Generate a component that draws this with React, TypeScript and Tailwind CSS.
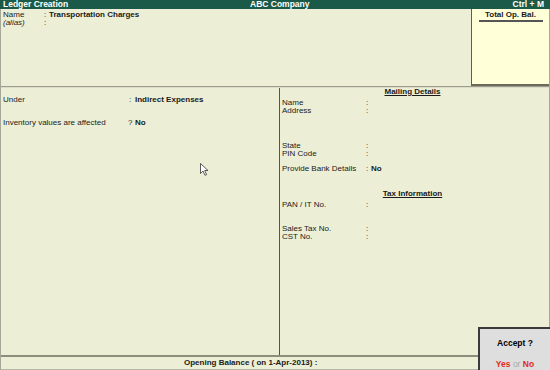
import React from "react";

const font = { fontFamily: '"Liberation Sans", Arial, sans-serif' };

function Row({ label, colon = ":", value, labelW, colonW = "w-[5px]", className = "" }: { label: React.ReactNode; colon?: string; value?: string; labelW: string; colonW?: string; className?: string }) {
  return (
    <div className={`flex h-[8px] items-center leading-[8px] ${className}`}>
      <div className={`${labelW} shrink-0`}>{label}</div>
      <div className={`${colonW} shrink-0`}>{colon}</div>
      {value ? <div className="font-bold">{value}</div> : null}
    </div>
  );
}

export default function App() {
  return (
    <div className="relative w-[550px] h-[370px] bg-[#ecefd6] text-[8px] text-[#1a1a1a] overflow-hidden" style={font}>
      {/* Title bar */}
      <div className="h-[9px] bg-[#1b5a48] text-white font-bold text-[8.5px] leading-[9px] flex items-center px-[3px] relative">
        <span>Ledger Creation</span>
        <span className="absolute left-[250px] top-0">ABC Company</span>
        <span className="ml-auto pr-[3px]">Ctrl + M</span>
      </div>

      <div className="border-l border-r border-[#a8a898] h-[361px] flex flex-col">
        {/* Top section */}
        <div className="h-[77px] flex">
          <div className="flex-1 pt-[2px] pl-[2px]">
            <Row label="Name" value="Transportation Charges" labelW="w-[41px]" />
            <Row label={<i>(alias)</i>} labelW="w-[41px]" />
          </div>
          <div className="w-[78px] bg-[#ffffd8] border-l border-[#5f5f50] border-b-2 border-b-[#6b6a5a] flex flex-col items-center pt-[2px]">
            <div className="font-bold leading-[8px] border-b-2 border-[#555] w-[64px] text-center pb-[1px]">Total Op. Bal.</div>
          </div>
        </div>

        {/* divider */}
        <div className="h-[2px] border-t border-[#9d9d8d] bg-[#dcdcc8]" />

        {/* Middle section */}
        <div className="flex-1 flex">
          <div className="w-[279px] border-r border-[#55554a] pl-[2px] pt-[8px] relative">
            <Row label="Under" value="Indirect Expenses" labelW="w-[126px]" colonW="w-[6px]" />
            <Row label="Inventory values are affected" colon="?" value="No" labelW="w-[125px]" colonW="w-[7px]" className="mt-[15px]" />
            <svg className="absolute left-[199px] top-[75px]" width="10" height="13" viewBox="0 0 10 13">
              <path d="M0.5 0.5 L0.5 10.5 L3 8 L5 12.3 L6.6 11.6 L4.7 7.5 L8 7.5 Z" fill="#fff" stroke="#333" strokeWidth="0.8" strokeLinejoin="round" />
            </svg>
          </div>
          <div className="flex-1 pl-[2px]">
            <div className="flex justify-center pr-[6px]">
              <span className="font-bold underline leading-[8px] h-[8px]">Mailing Details</span>
            </div>
            <Row label="Name" labelW="w-[84px]" className="mt-[3px]" />
            <Row label="Address" labelW="w-[84px]" />
            <Row label="State" labelW="w-[84px]" className="mt-[27px]" />
            <Row label="PIN Code" labelW="w-[84px]" />
            <Row label="Provide Bank Details" value="No" labelW="w-[84px]" className="mt-[7px]" />
            <div className="flex justify-center pr-[6px] mt-[17px]">
              <span className="font-bold underline leading-[8px] h-[8px]">Tax Information</span>
            </div>
            <Row label="PAN / IT No." labelW="w-[84px]" className="mt-[3px]" />
            <Row label="Sales Tax No." labelW="w-[84px]" className="mt-[16px]" />
            <Row label="CST No." labelW="w-[84px]" />
          </div>
        </div>

        {/* Bottom bar */}
        <div className="h-[15px] border-t-2 border-[#8d8d7d] border-b border-b-[#b8b8a8] flex items-center">
          <span className="font-bold ml-[183px]">Opening Balance ( on 1-Apr-2013) :</span>
        </div>
      </div>

      {/* Accept box */}
      <div className="absolute left-[478px] top-[327px] w-[72px] h-[43px] bg-[#dedede] border-l-2 border-t-2 border-[#3a3a3a] flex flex-col items-center">
        <div className="font-bold text-[8.5px] mt-[10px] leading-[9px] text-black">Accept ?</div>
        <div className="mt-[12px] leading-[9px] font-bold text-[8.5px]">
          <span className="text-[#e02a1a]">Yes</span>
          <span className="text-[#a8a8a8] font-normal"> or </span>
          <span className="text-[#e02a1a]">No</span>
        </div>
      </div>
    </div>
  );
}
